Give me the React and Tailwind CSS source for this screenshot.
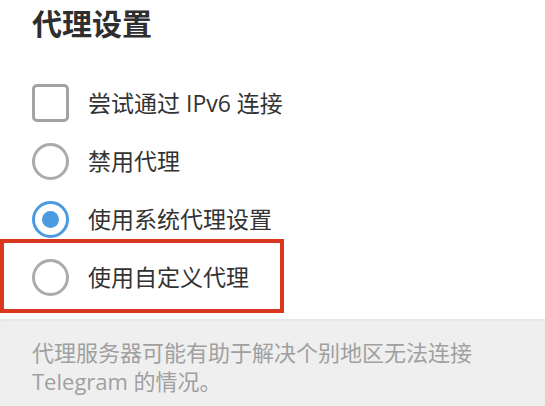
const FONT = { fontFamily: '"Open Sans", "Noto Sans CJK SC", sans-serif' };

function Checkbox() {
  return <span className="block w-[37px] h-[38px] rounded-[5px] border-[3px] border-[#a3a3a3] bg-white" />;
}

function Radio({ checked }) {
  if (checked) {
    return (
      <span className="flex items-center justify-center w-[37px] h-[37px] rounded-full border-[3px] border-[#4a9be0]">
        <span className="block w-[17px] h-[17px] rounded-full bg-[#4a9be0]" />
      </span>
    );
  }
  return <span className="block w-[37px] h-[37px] rounded-full border-[3px] border-[#ababab]" />;
}

function Row({ control, label, children }) {
  return (
    <div className="relative flex items-center h-[58px] pl-[32px] gap-[19px]">
      {control}
      <span className="text-[23px] leading-[30px] text-[#333]">{label}</span>
      {children}
    </div>
  );
}

export default function App() {
  return (
    <div className="w-[545px] h-[406px] bg-white overflow-hidden flex flex-col" style={FONT}>
      <h1 className="pl-[32px] pt-[4px] text-[30px] leading-[40px] font-bold text-[#2e2e2e]">代理设置</h1>

      <div className="mt-[30px]">
        <Row control={<Checkbox />} label="尝试通过 IPv6 连接" />
        <Row control={<Radio />} label="禁用代理" />
        <Row control={<Radio checked />} label="使用系统代理设置" />
        <Row control={<Radio />} label="使用自定义代理">
          <span className="absolute left-0 top-[-9px] w-[284px] h-[74px] border-4 border-[#d8381f]" />
        </Row>
      </div>

      <div className="mt-[13px] flex-1 bg-[#efefef] shadow-[inset_0_2px_2px_rgba(0,0,0,0.04)] pl-[32px] pt-[19px] pr-[40px]">
        <p className="text-[22px] leading-[29px] text-[#a0a0a0]">
          代理服务器可能有助于解决个别地区无法连接 Telegram 的情况。
        </p>
      </div>
    </div>
  );
}
